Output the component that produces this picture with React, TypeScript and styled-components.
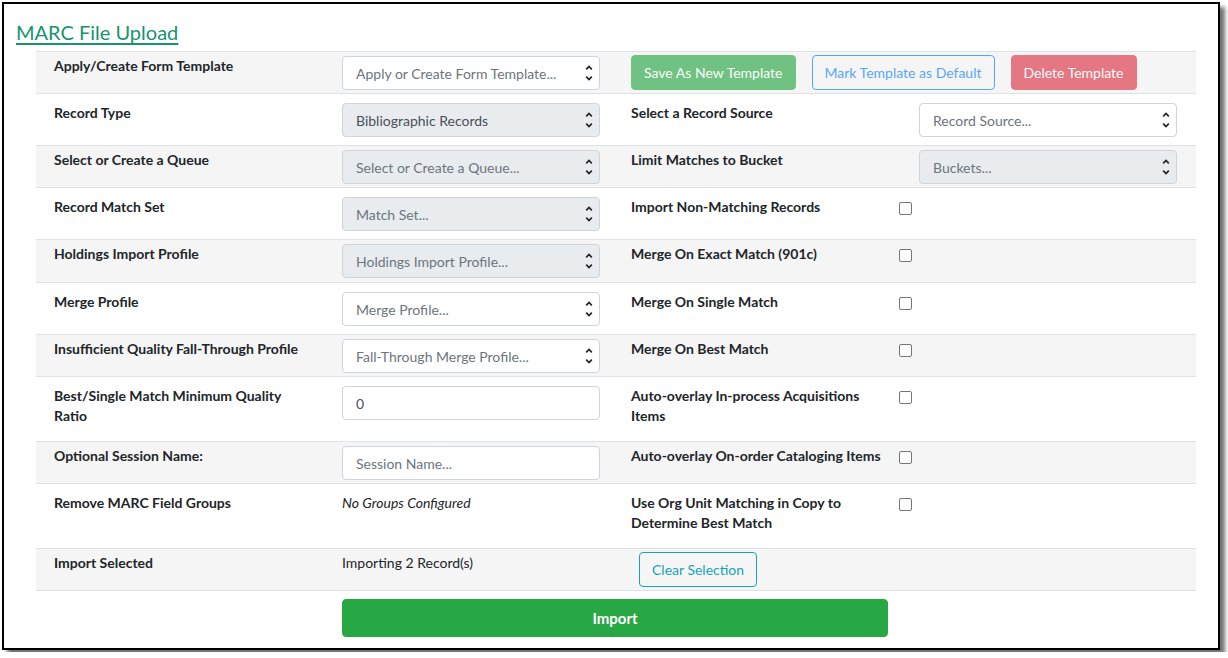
import React from 'react'
import styled, { createGlobalStyle } from 'styled-components'

const GlobalStyle = createGlobalStyle`
  html, body {
    margin: 0;
    padding: 0;
    background: #fff;
  }
  body {
    font-family: Lato, 'Open Sans', sans-serif;
    color: #212529;
  }
`

type SelectProps = {
  text: string
  disabled?: boolean
  filled?: boolean
}

const Select: React.FC<SelectProps> = ({ text, disabled, filled }) => (
  <SelectBox $disabled={disabled} $filled={filled}>
    <span>{text}</span>
    <svg width="10" height="20" viewBox="0 0 10 20" fill="none">
      <path d="M2.2 6.3 L5 3.5 L7.8 6.3" stroke="#222" strokeWidth="1.7" />
      <path d="M2.2 13.7 L5 16.5 L7.8 13.7" stroke="#222" strokeWidth="1.7" />
    </svg>
  </SelectBox>
)

const App: React.FC = () => {
  return (
    <>
      <GlobalStyle />
      <Frame>
        <Title href="#">MARC File Upload</Title>
        <Table>
          <Row $shade>
            <Label>Apply/Create Form Template</Label>
            <Cell>
              <Select text="Apply or Create Form Template..." />
            </Cell>
            <ButtonGroup>
              <Button $tone="#28a745" $fill>Save As New Template</Button>
              <Button $tone="#007bff">Mark Template as Default</Button>
              <Button $tone="#dc3545" $fill>Delete Template</Button>
            </ButtonGroup>
          </Row>

          <Row>
            <Label>Record Type</Label>
            <Cell>
              <Select text="Bibliographic Records" disabled filled />
            </Cell>
            <SideLabel>Select a Record Source</SideLabel>
            <SideCell>
              <Select text="Record Source..." />
            </SideCell>
          </Row>

          <Row $shade>
            <Label>Select or Create a Queue</Label>
            <Cell>
              <Select text="Select or Create a Queue..." disabled />
            </Cell>
            <SideLabel>Limit Matches to Bucket</SideLabel>
            <SideCell>
              <Select text="Buckets..." disabled />
            </SideCell>
          </Row>

          <Row>
            <Label>Record Match Set</Label>
            <Cell>
              <Select text="Match Set..." disabled />
            </Cell>
            <SideLabel>Import Non-Matching Records</SideLabel>
            <CheckCell>
              <Checkbox />
            </CheckCell>
          </Row>

          <Row $shade $extra>
            <Label>Holdings Import Profile</Label>
            <Cell>
              <Select text="Holdings Import Profile..." disabled />
            </Cell>
            <SideLabel>Merge On Exact Match (901c)</SideLabel>
            <CheckCell>
              <Checkbox />
            </CheckCell>
          </Row>

          <Row>
            <Label>Merge Profile</Label>
            <Cell>
              <Select text="Merge Profile..." />
            </Cell>
            <SideLabel>Merge On Single Match</SideLabel>
            <CheckCell>
              <Checkbox />
            </CheckCell>
          </Row>

          <Row $shade>
            <Label>Insufficient Quality Fall-Through Profile</Label>
            <Cell>
              <Select text="Fall-Through Merge Profile..." />
            </Cell>
            <SideLabel>Merge On Best Match</SideLabel>
            <CheckCell>
              <Checkbox />
            </CheckCell>
          </Row>

          <Row>
            <Label>
              Best/Single Match Minimum Quality
              <br />
              Ratio
            </Label>
            <Cell>
              <TextInput defaultValue="0" />
            </Cell>
            <SideLabel>
              Auto-overlay In-process Acquisitions
              <br />
              Items
            </SideLabel>
            <CheckCell>
              <Checkbox />
            </CheckCell>
          </Row>

          <Row $shade>
            <Label>Optional Session Name:</Label>
            <Cell>
              <TextInput placeholder="Session Name..." />
            </Cell>
            <SideLabel>Auto-overlay On-order Cataloging Items</SideLabel>
            <CheckCell>
              <Checkbox />
            </CheckCell>
          </Row>

          <Row>
            <Label>Remove MARC Field Groups</Label>
            <Cell>
              <Note $italic>No Groups Configured</Note>
            </Cell>
            <SideLabel>
              Use Org Unit Matching in Copy to
              <br />
              Determine Best Match
            </SideLabel>
            <CheckCell>
              <Checkbox />
            </CheckCell>
          </Row>

          <Row $shade $last>
            <Label>Import Selected</Label>
            <Cell>
              <Note>Importing 2 Record(s)</Note>
            </Cell>
            <Cell>
              <OutlineButton>Clear Selection</OutlineButton>
            </Cell>
          </Row>
        </Table>
        <ImportButton>Import</ImportButton>
      </Frame>
    </>
  )
}

const Frame = styled.div`
  box-sizing: border-box;
  width: 1218px;
  height: 648px;
  margin: 2px;
  border: 2px solid #000;
  box-shadow: 5px 5px 4px rgba(0, 0, 0, 0.55);
  background: #fff;
  padding: 16px 0 0 12px;
`

const Title = styled.a`
  display: inline-block;
  font-size: 20px;
  line-height: 24px;
  color: #17936f;
  text-decoration: underline;
  text-underline-offset: 3px;
  text-decoration-thickness: 1.5px;
  margin-bottom: 7px;
`

const Table = styled.div`
  width: 1160px;
  margin-left: 20px;
`

const Row = styled.div<{ $shade?: boolean; $last?: boolean; $extra?: boolean }>`
  display: grid;
  grid-template-columns: 306px 289px 268px 1fr;
  align-items: start;
  padding: ${(p) => (p.$shade ? `4px 0 ${p.$extra ? 4 : 3}px` : '9px 0 8px')};
  background: ${(p) => (p.$shade ? '#f5f5f5' : '#fff')};
  border-top: 1px solid #dee2e6;
  border-bottom: ${(p) => (p.$last ? '1px solid #dee2e6' : 'none')};
`

const Label = styled.div`
  padding-left: 18px;
  margin-bottom: 7px;
  font-size: 14px;
  font-weight: 700;
  line-height: 20px;
  color: #212529;
`

const SideLabel = styled(Label)`
  padding-left: 0;
  white-space: nowrap;
`

const Cell = styled.div`
  display: flex;
`

const SideCell = styled.div`
  padding-left: 20px;
`

const CheckCell = styled.div`
  display: flex;
  align-items: center;
  height: 20px;
  margin-top: 1px;
`

const SelectBox = styled.div<{ $disabled?: boolean; $filled?: boolean }>`
  box-sizing: border-box;
  display: flex;
  align-items: center;
  justify-content: space-between;
  width: 258px;
  height: 34px;
  padding: 0 5px 0 13px;
  border: 1px solid #ced4da;
  border-radius: 4px;
  background: ${(p) => (p.$disabled ? '#e9ecef' : '#fff')};
  color: ${(p) => (p.$filled ? '#495057' : '#6c757d')};
  font-size: 14px;
`

const TextInput = styled.input.attrs({ readOnly: true })`
  box-sizing: border-box;
  width: 258px;
  height: 34px;
  padding: 0 13px;
  border: 1px solid #ced4da;
  border-radius: 4px;
  background: #fff;
  font-family: inherit;
  font-size: 14px;
  color: #495057;
  outline: none;

  &::placeholder {
    color: #6c757d;
  }
`

const Note = styled.div<{ $italic?: boolean }>`
  font-size: 14px;
  line-height: 20px;
  font-style: ${(p) => (p.$italic ? 'italic' : 'normal')};
  color: #212529;
`

const Checkbox = styled.span`
  box-sizing: border-box;
  display: block;
  width: 13px;
  height: 13px;
  border: 1px solid #767676;
  border-radius: 2px;
  background: #fff;
`

const ButtonGroup = styled.div`
  grid-column: 3 / 5;
  display: flex;
  gap: 16px;
  margin-top: -1px;
`

const Button = styled.button<{ $tone: string; $fill?: boolean }>`
  height: 35px;
  padding: 0 12px;
  border: 1px solid ${(p) => p.$tone};
  border-radius: 4px;
  background: ${(p) => (p.$fill ? p.$tone : 'transparent')};
  color: ${(p) => (p.$fill ? '#fff' : p.$tone)};
  font-family: inherit;
  font-size: 14px;
  opacity: 0.65;
`

const OutlineButton = styled.button`
  height: 35px;
  margin-left: 8px;
  margin-top: -1px;
  padding: 0 12px;
  border: 1px solid #17a2b8;
  border-radius: 4px;
  background: transparent;
  color: #17a2b8;
  font-family: inherit;
  font-size: 14px;
`

const ImportButton = styled.button`
  display: block;
  width: 546px;
  height: 38px;
  margin: 8px 0 0 326px;
  border: 1px solid #28a745;
  border-radius: 4px;
  background: #28a745;
  color: #fff;
  font-family: inherit;
  font-size: 15px;
  font-weight: 700;
`

export default App
